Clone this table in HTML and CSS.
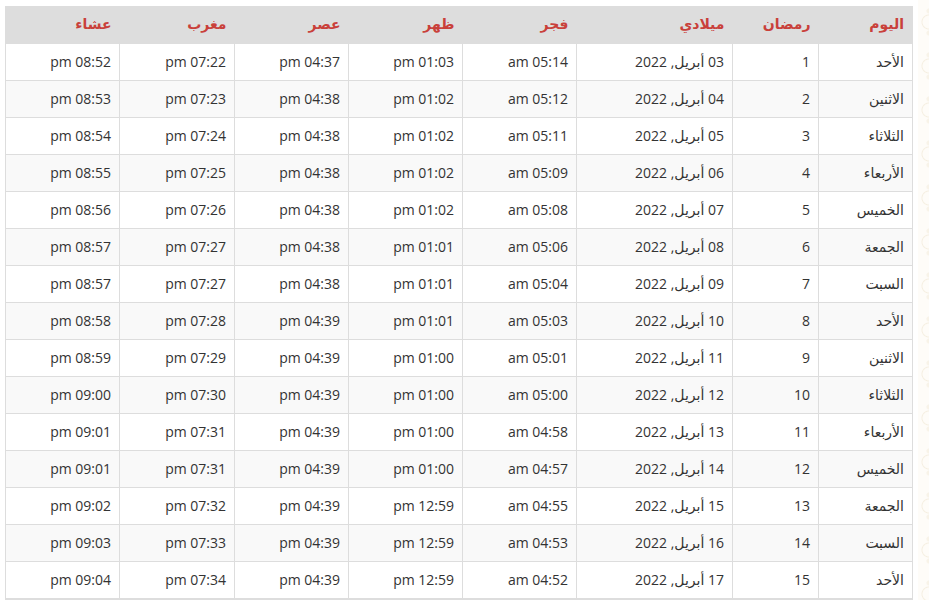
FILE: index.html
```html
<!DOCTYPE html>
<html lang="ar">
<head>
<meta charset="utf-8">
<title>إمساكية رمضان</title>
<link rel="stylesheet" href="styles.css">
</head>
<body>
<div class="page">
  <div class="content">
    <table class="times" dir="rtl">
      <colgroup>
        <col class="c-day"><col class="c-ram"><col class="c-date">
        <col class="c-t"><col class="c-t"><col class="c-t"><col class="c-mg"><col class="c-t">
      </colgroup>
      <thead>
        <tr><th>اليوم</th><th>رمضان</th><th>ميلادي</th><th>فجر</th><th>ظهر</th><th>عصر</th><th>مغرب</th><th>عشاء</th></tr>
      </thead>
      <tbody>
        <tr><td>الأحد</td><td>1</td><td>03 أبريل, 2022</td><td>05:14 am</td><td>01:03 pm</td><td>04:37 pm</td><td>07:22 pm</td><td>08:52 pm</td></tr>
        <tr><td>الاثنين</td><td>2</td><td>04 أبريل, 2022</td><td>05:12 am</td><td>01:02 pm</td><td>04:38 pm</td><td>07:23 pm</td><td>08:53 pm</td></tr>
        <tr><td>الثلاثاء</td><td>3</td><td>05 أبريل, 2022</td><td>05:11 am</td><td>01:02 pm</td><td>04:38 pm</td><td>07:24 pm</td><td>08:54 pm</td></tr>
        <tr><td>الأربعاء</td><td>4</td><td>06 أبريل, 2022</td><td>05:09 am</td><td>01:02 pm</td><td>04:38 pm</td><td>07:25 pm</td><td>08:55 pm</td></tr>
        <tr><td>الخميس</td><td>5</td><td>07 أبريل, 2022</td><td>05:08 am</td><td>01:02 pm</td><td>04:38 pm</td><td>07:26 pm</td><td>08:56 pm</td></tr>
        <tr><td>الجمعة</td><td>6</td><td>08 أبريل, 2022</td><td>05:06 am</td><td>01:01 pm</td><td>04:38 pm</td><td>07:27 pm</td><td>08:57 pm</td></tr>
        <tr><td>السبت</td><td>7</td><td>09 أبريل, 2022</td><td>05:04 am</td><td>01:01 pm</td><td>04:38 pm</td><td>07:27 pm</td><td>08:57 pm</td></tr>
        <tr><td>الأحد</td><td>8</td><td>10 أبريل, 2022</td><td>05:03 am</td><td>01:01 pm</td><td>04:39 pm</td><td>07:28 pm</td><td>08:58 pm</td></tr>
        <tr><td>الاثنين</td><td>9</td><td>11 أبريل, 2022</td><td>05:01 am</td><td>01:00 pm</td><td>04:39 pm</td><td>07:29 pm</td><td>08:59 pm</td></tr>
        <tr><td>الثلاثاء</td><td>10</td><td>12 أبريل, 2022</td><td>05:00 am</td><td>01:00 pm</td><td>04:39 pm</td><td>07:30 pm</td><td>09:00 pm</td></tr>
        <tr><td>الأربعاء</td><td>11</td><td>13 أبريل, 2022</td><td>04:58 am</td><td>01:00 pm</td><td>04:39 pm</td><td>07:31 pm</td><td>09:01 pm</td></tr>
        <tr><td>الخميس</td><td>12</td><td>14 أبريل, 2022</td><td>04:57 am</td><td>01:00 pm</td><td>04:39 pm</td><td>07:31 pm</td><td>09:01 pm</td></tr>
        <tr><td>الجمعة</td><td>13</td><td>15 أبريل, 2022</td><td>04:55 am</td><td>12:59 pm</td><td>04:39 pm</td><td>07:32 pm</td><td>09:02 pm</td></tr>
        <tr><td>السبت</td><td>14</td><td>16 أبريل, 2022</td><td>04:53 am</td><td>12:59 pm</td><td>04:39 pm</td><td>07:33 pm</td><td>09:03 pm</td></tr>
        <tr><td>الأحد</td><td>15</td><td>17 أبريل, 2022</td><td>04:52 am</td><td>12:59 pm</td><td>04:39 pm</td><td>07:34 pm</td><td>09:04 pm</td></tr>
      </tbody>
    </table>
  </div>
  <div class="decor"></div>
</div>
</body>
</html>
```
FILE: styles.css
```css
html, body {
  margin: 0;
  padding: 0;
  background: #fff;
}
body {
  font-family: "Open Sans", "DejaVu Sans", sans-serif;
  font-size: 14px;
  color: #333;
}
.page {
  display: flex;
  align-items: stretch;
  min-height: 600px;
}
.content {
  padding: 6px 0 0 5px;
  width: 907px;
  flex: none;
}
.decor {
  flex: 1;
  margin-left: 6px;
  background-color: #fefcf8;
  background-image:
    radial-gradient(circle at 50% 50%, transparent 6px, #f5efe2 7px, transparent 8px),
    radial-gradient(circle at 50% 50%, #f8f3e8 2px, transparent 3px);
  background-size: 22px 44px, 22px 22px;
  background-position: 0 0, 0 0;
}
.times {
  width: 907px;
  table-layout: fixed;
  border-collapse: collapse;
  border-spacing: 0;
  border-left: 1px solid #ddd;
  border-right: 1px solid #ddd;
  border-bottom: 2px solid #ddd;
}
.c-day { width: 94px; }
.c-ram { width: 86px; }
.c-date { width: 156px; }
.c-t { width: 114px; }
.c-mg { width: 115px; }
.times th {
  background: #ddd;
  color: #c9403a;
  font-weight: bold;
  text-align: right;
  padding: 8px 8px 9px;
  line-height: 20px;
  border: none;
  border-bottom: 1px solid #ddd;
}
.times td {
  text-align: right;
  padding: 8px 8px;
  line-height: 20px;
  border: 1px solid #ddd;
  white-space: nowrap;
}
.times tbody tr:nth-child(even) td {
  background: #f9f9f9;
}
```
